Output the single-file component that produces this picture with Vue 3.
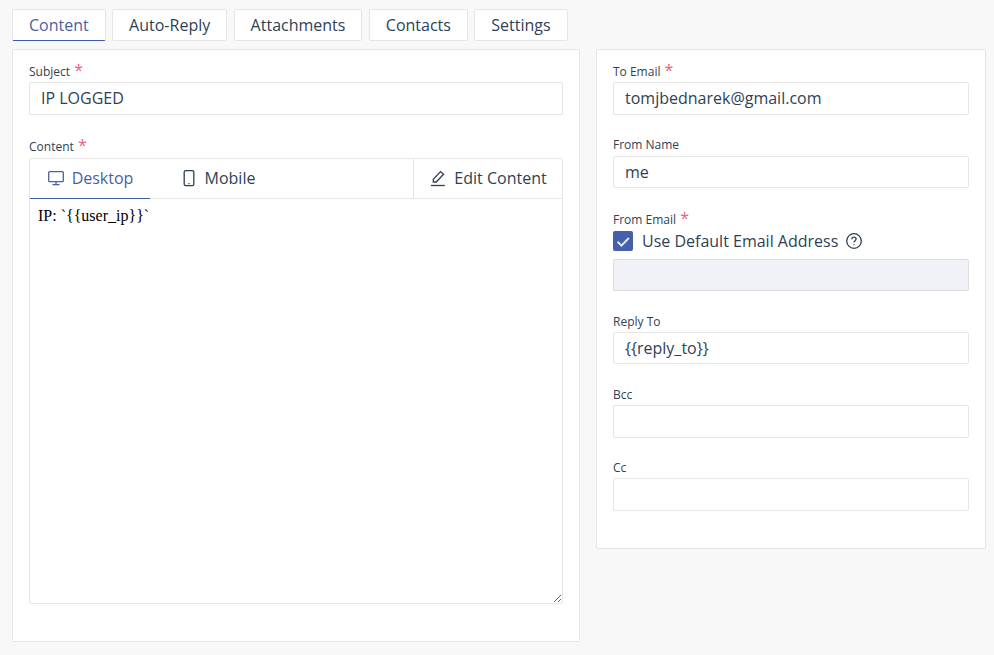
<script setup>
import { ref } from 'vue'

const tabs = ['Content', 'Auto-Reply', 'Attachments', 'Contacts', 'Settings']
const activeTab = ref('Content')
const preview = ref('desktop')
const useDefault = ref(true)
const body = 'IP: `{{user_ip}}`'
</script>

<template>
  <div class="page">
    <nav class="tabs">
      <button
        v-for="tab in tabs"
        :key="tab"
        class="tab"
        :class="{ active: activeTab === tab }"
        @click="activeTab = tab"
      >{{ tab }}</button>
    </nav>

    <div class="columns">
      <section class="card main">
        <div class="field first">
          <label>Subject <span class="req">*</span></label>
          <input class="input" value="IP LOGGED" />
        </div>

        <div class="field content-field">
          <label>Content <span class="req">*</span></label>
          <div class="editor">
            <div class="editor-head">
              <button class="view" :class="{ on: preview === 'desktop' }" @click="preview = 'desktop'">
                <svg width="18" height="18" viewBox="0 0 18 18" fill="none" stroke="currentColor" stroke-width="1.3">
                  <rect x="1.7" y="2.7" width="14.6" height="10" rx="1" />
                  <path d="M9 12.7v3M5.5 15.7h7" />
                </svg>
                Desktop
              </button>
              <button class="view mobile" :class="{ on: preview === 'mobile' }" @click="preview = 'mobile'">
                <svg width="18" height="18" viewBox="0 0 18 18" fill="none" stroke="currentColor" stroke-width="1.3">
                  <rect x="4.2" y="1.7" width="9.6" height="15" rx="1.4" />
                  <path d="M8.4 14.6h1.2" />
                </svg>
                Mobile
              </button>
              <button class="edit">
                <svg width="18" height="18" viewBox="0 0 18 18" fill="none" stroke="currentColor" stroke-width="1.3">
                  <path d="M4.3 13V10.2L11.6 2.6l3 2.7-7.4 7.7z" />
                  <path d="M1.8 16.5h14" />
                </svg>
                Edit Content
              </button>
            </div>
            <div class="preview">{{ body }}</div>
          </div>
        </div>
      </section>

      <aside class="card side">
        <div class="field first">
          <label>To Email <span class="req">*</span></label>
          <input class="input" value="tomjbednarek@gmail.com" />
        </div>
        <div class="field from-name">
          <label>From Name</label>
          <input class="input" value="me" />
        </div>
        <div class="field from-email">
          <label>From Email <span class="req">*</span></label>
          <div class="check-row">
            <span class="check" :class="{ on: useDefault }" @click="useDefault = !useDefault">
              <svg v-if="useDefault" width="20" height="20" viewBox="0 0 20 20" fill="none" stroke="#e4e8f4" stroke-width="2">
                <path d="M4.5 10.8 8.5 14.6 15.8 7" />
              </svg>
            </span>
            <span>Use Default Email Address</span>
            <svg class="help" width="18" height="18" viewBox="0 0 18 18" fill="none" stroke="currentColor" stroke-width="1.3">
              <circle cx="9" cy="9" r="7.3" />
              <path d="M6.9 7.2c0-1.2 1-2 2.1-2s2.1.8 2.1 1.9c0 1.6-2.1 1.7-2.1 3.4" />
              <path d="M9 12.2v1.1" />
            </svg>
          </div>
          <input class="input disabled" disabled />
        </div>
        <div class="field">
          <label>Reply To</label>
          <input class="input" value="{{reply_to}}" />
        </div>
        <div class="field">
          <label>Bcc</label>
          <input class="input" />
        </div>
        <div class="field">
          <label>Cc</label>
          <input class="input" />
        </div>
      </aside>
    </div>
  </div>
</template>

<style>
html,
body {
  background: #f8f8f8;
}
</style>

<style scoped>
.page {
  height: 655px;
  overflow: hidden;
  padding: 9px 8px 0 12px;
  box-sizing: border-box;
  font-family: "Open Sans", sans-serif;
  color: #2f3f55;
}

button {
  font: inherit;
  color: inherit;
  background: none;
  border: 0;
  padding: 0;
}

.tabs {
  display: flex;
  gap: 6.4px;
  margin-bottom: 8px;
}

.tab {
  height: 32px;
  padding: 0 16px;
  box-sizing: border-box;
  font-size: 16px;
  background: #fff;
  border: 1px solid #e6e6e6;
  border-radius: 2px;
}

.tab.active {
  color: #4a5fa5;
  border-bottom: 1px solid #3f5bab;
}

.columns {
  display: flex;
  align-items: flex-start;
  gap: 16px;
}

.card {
  box-sizing: border-box;
  background: #fff;
  border: 1px solid #e6e6e6;
  border-radius: 2px;
}

.main {
  width: 568px;
  height: 593px;
  padding: 13px 16px 0;
}

.side {
  width: 390px;
  height: 500px;
  padding: 13px 16px 0;
}

.field {
  margin-bottom: 21.8px;
}

.field.first .input {
  height: 32.8px;
}

.main .first {
  margin-bottom: 23.6px;
}

.content-field {
  margin-bottom: 0;
}

label {
  display: block;
  height: 19px;
  font-size: 12px;
  line-height: 18px;
  color: #2f3f55;
}

.content-field label {
  height: 19.4px;
}

.from-name {
  margin-bottom: 22.2px;
}

.from-name label {
  line-height: 16px;
}

.from-email label {
  height: 18.6px;
  line-height: 20px;
}

.req {
  color: #ec5f84;
  font-size: 16px;
  line-height: 12px;
  margin-left: 1px;
}

.input {
  display: block;
  width: 100%;
  height: 32.4px;
  box-sizing: border-box;
  padding: 0 11px;
  font-family: inherit;
  font-size: 16px;
  color: #2f3f55;
  background: #fff;
  border: 1px solid #e6e6e6;
  border-radius: 2px;
  outline: none;
}

.input.disabled {
  background: #f1f2f7;
  border-color: #dcdde3;
}

.check-row {
  display: flex;
  align-items: center;
  height: 20px;
  margin: 2px 0 8px;
  font-size: 16px;
}

.check {
  width: 20px;
  height: 20px;
  margin-right: 9px;
  background: #4460ad;
  border-radius: 2px;
}

.check svg {
  display: block;
}

.help {
  margin-left: 7px;
}

.editor {
  height: 446px;
  box-sizing: border-box;
  border: 1px solid #e6e6e6;
  border-radius: 2px;
  display: flex;
  flex-direction: column;
}

.editor-head {
  display: flex;
  height: 40px;
  flex: none;
  box-sizing: border-box;
  border-bottom: 1px solid #e6e6e6;
  font-size: 16px;
}

.view,
.edit {
  display: flex;
  align-items: center;
  gap: 7px;
  height: 40px;
}

.view {
  width: 120px;
  justify-content: center;
  border-bottom: 1px solid transparent;
}

.view.on {
  color: #4a5fa5;
  border-bottom-color: #3f5bab;
}

.mobile {
  width: 135px;
}

.edit {
  margin-left: auto;
  width: 149px;
  justify-content: center;
  border-left: 1px solid #e6e6e6;
  height: 39px;
}

.preview {
  flex: 1;
  overflow: auto;
  resize: vertical;
  padding: 7px 8px;
  font-family: "Liberation Serif", serif;
  font-size: 16px;
  line-height: 20px;
  color: #000;
}
</style>
